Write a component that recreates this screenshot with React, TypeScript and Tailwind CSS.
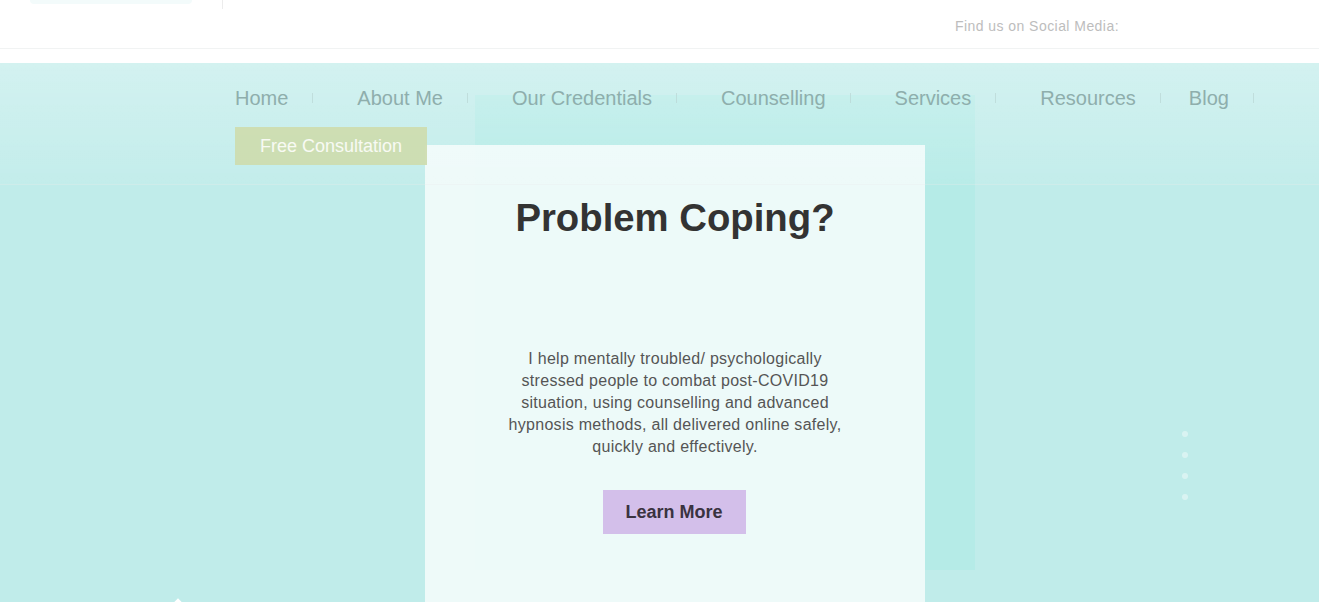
import React from "react";

const navItems = ["Home", "About Me", "Our Credentials", "Counselling", "Services", "Resources", "Blog"];

export default function App() {
  return (
    <div className="h-[602px] w-full overflow-hidden bg-[#c0ecea] font-['Liberation_Sans',Arial,sans-serif]">
      {/* Top bar */}
      <div className="h-[63px] bg-white">
        <div className="flex h-[49px] items-start border-b border-[#f1f3f3]">
          <div className="ml-[30px] h-[4px] w-[162px] rounded-b-lg bg-[#f3fbfb]" />
          <div className="ml-[30px] h-[9px] w-px bg-[#ececec]" />
          <span className="ml-auto mr-[200px] self-center pt-[4px] text-[14px] tracking-[0.45px] text-[#bdbdbd]">
            Find us on Social Media:
          </span>
        </div>
      </div>

      {/* Hero */}
      <section className="relative h-[539px]">
        {/* decorative back panel */}
        <div className="absolute left-[475px] top-[32px] h-[475px] w-[500px] bg-[#b5ebe7]" />

        {/* slider dots */}
        <div className="absolute left-[1182px] top-[368px] flex flex-col gap-[15px]">
          {[0, 1, 2, 3].map((i) => (
            <span key={i} className="h-[6px] w-[6px] rounded-full bg-white/40" />
          ))}
        </div>

        <div className="absolute left-[174px] top-[537px] h-[8px] w-[8px] rotate-45 bg-white" />

        {/* Card */}
        <div className="relative pl-[425px] pt-[82px]">
          <div className="flex h-[500px] w-[500px] flex-col items-center bg-[#f0fbfa]/95 pt-[51px] text-center">
            <h1 className="text-[38.3px] font-bold leading-[44px] text-[#333333]">Problem Coping?</h1>
            <p className="mt-[108px] w-[350px] text-[16px] leading-[22px] tracking-[0.28px] text-[#555555]">
              I help mentally troubled/ psychologically stressed people to combat post-COVID19 situation, using
              counselling and advanced hypnosis methods, all delivered online safely, quickly and effectively.
            </p>
            <button className="mr-[2px] mt-[32px] h-[44px] w-[143px] bg-[#d3bfea] text-[18px] font-bold text-[#3a3340]">
              Learn More
            </button>
          </div>
        </div>

        {/* Header overlay */}
        <header className="absolute inset-x-0 top-0 h-[122px] border-b border-black/[0.025] bg-gradient-to-b from-white/30 to-white/5 pl-[235px] pt-[23px]">
          <nav className="flex items-center">
            {navItems.map((item, i) => (
              <div
                key={item}
                className={`flex items-center ${i === 0 ? "" : i === navItems.length - 1 ? "ml-[28px]" : "ml-[44px]"}`}
              >
                <a className="text-[20px] leading-[24px] text-[#8eaeac]">{item}</a>
                <span className="ml-[24px] h-[10px] w-px bg-[#b9d6d4]/70" />
              </div>
            ))}
          </nav>
          <button className="mt-[17px] h-[38px] w-[192px] bg-[#cddcb0]/95 text-[18px] text-white/85">
            Free Consultation
          </button>
        </header>
      </section>
    </div>
  );
}
